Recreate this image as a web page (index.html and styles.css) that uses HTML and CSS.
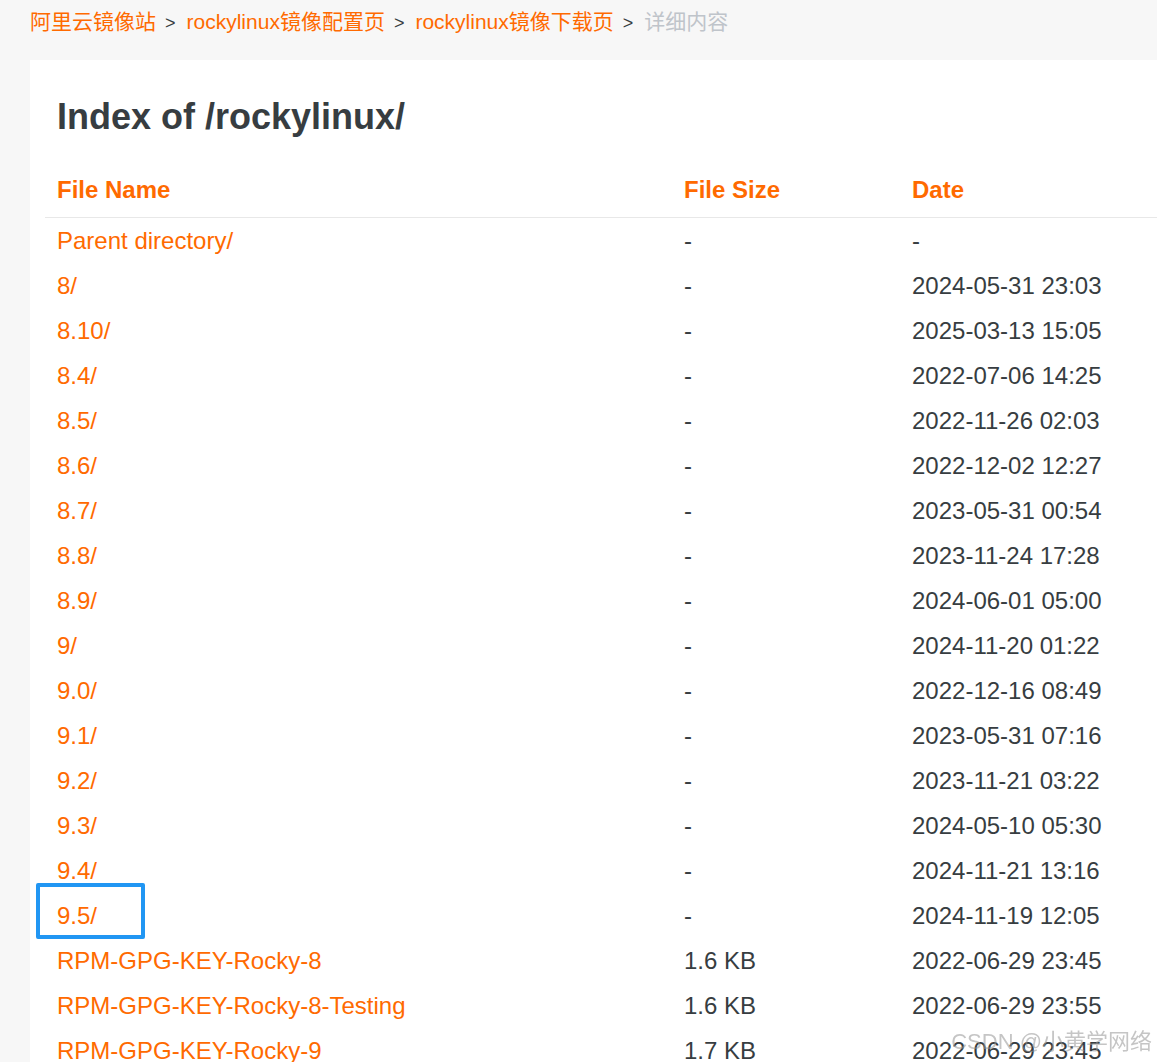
FILE: index.html
```html
<!DOCTYPE html>
<html lang="zh-CN">

<head>
  <meta charset="UTF-8" />
  <meta name="viewport" content="width=device-width, initial-scale=1.0" />
  <title>Index of /rockylinux/</title>
  <link rel="stylesheet" href="styles.css">
</head>

<body>
  <!-- breadcrumb -->
  <div class="crumbs">
    <a href="#">阿里云镜像站</a><span class="sep">&gt;</span><a href="#">rockylinux镜像配置页</a><span class="sep">&gt;</span><a href="#">rockylinux镜像下载页</a><span class="sep">&gt;</span><span class="current">详细内容</span>
  </div>

  <div class="panel">
    <h1>Index of /rockylinux/</h1>

    <table class="listing">
      <colgroup>
        <col class="col-name">
        <col class="col-size">
        <col class="col-date">
      </colgroup>
      <thead>
        <tr>
          <th>File Name</th>
          <th>File Size</th>
          <th>Date</th>
        </tr>
      </thead>
      <tbody>
        <tr><td><a href="#">Parent directory/</a></td><td>-</td><td>-</td></tr>
        <tr><td><a href="#">8/</a></td><td>-</td><td>2024-05-31 23:03</td></tr>
        <tr><td><a href="#">8.10/</a></td><td>-</td><td>2025-03-13 15:05</td></tr>
        <tr><td><a href="#">8.4/</a></td><td>-</td><td>2022-07-06 14:25</td></tr>
        <tr><td><a href="#">8.5/</a></td><td>-</td><td>2022-11-26 02:03</td></tr>
        <tr><td><a href="#">8.6/</a></td><td>-</td><td>2022-12-02 12:27</td></tr>
        <tr><td><a href="#">8.7/</a></td><td>-</td><td>2023-05-31 00:54</td></tr>
        <tr><td><a href="#">8.8/</a></td><td>-</td><td>2023-11-24 17:28</td></tr>
        <tr><td><a href="#">8.9/</a></td><td>-</td><td>2024-06-01 05:00</td></tr>
        <tr><td><a href="#">9/</a></td><td>-</td><td>2024-11-20 01:22</td></tr>
        <tr><td><a href="#">9.0/</a></td><td>-</td><td>2022-12-16 08:49</td></tr>
        <tr><td><a href="#">9.1/</a></td><td>-</td><td>2023-05-31 07:16</td></tr>
        <tr><td><a href="#">9.2/</a></td><td>-</td><td>2023-11-21 03:22</td></tr>
        <tr><td><a href="#">9.3/</a></td><td>-</td><td>2024-05-10 05:30</td></tr>
        <tr><td><a href="#">9.4/</a></td><td>-</td><td>2024-11-21 13:16</td></tr>
        <tr><td class="marked"><a href="#">9.5/</a><span class="mark-box"></span></td><td>-</td><td>2024-11-19 12:05</td></tr>
        <tr><td><a href="#">RPM-GPG-KEY-Rocky-8</a></td><td>1.6 KB</td><td>2022-06-29 23:45</td></tr>
        <tr><td><a href="#">RPM-GPG-KEY-Rocky-8-Testing</a></td><td>1.6 KB</td><td>2022-06-29 23:55</td></tr>
        <tr><td><a href="#">RPM-GPG-KEY-Rocky-9</a></td><td>1.7 KB</td><td>2022-06-29 23:45</td></tr>
      </tbody>
    </table>
  </div>

  <div class="watermark">CSDN @小黄学网络</div>
</body>

</html>
```

FILE: styles.css
```css
* {
  margin: 0;
  padding: 0;
  box-sizing: border-box;
  font-family: 'Liberation Sans', Arial, 'Noto Sans CJK SC', sans-serif;
}

body {
  background: #f7f7f7;
  color: #373d41;
  overflow-x: hidden;
}

a {
  color: #ff6a00;
  text-decoration: none;
}

.crumbs {
  height: 44px;
  line-height: 44px;
  padding-left: 30px;
  margin-bottom: 16px;
  font-size: 21px;
  white-space: nowrap;
}

.crumbs .sep {
  font-size: 18px;
  color: #373d41;
  margin: 0 11px 0 9px;
}

.crumbs .current {
  color: #bfc4ca;
}

.panel {
  background: #fff;
  margin-left: 30px;
  padding: 39px 0 40px 15px;
}

h1 {
  font-size: 36px;
  line-height: 36px;
  font-weight: bold;
  color: #373d41;
  margin-left: 12px;
}

.listing {
  width: 100%;
  margin-top: 32px;
  border-collapse: collapse;
  table-layout: fixed;
  font-size: 24px;
}

.col-name {
  width: 627px;
}

.col-size {
  width: 228px;
}

.listing th {
  text-align: left;
  color: #ff6a00;
  font-weight: bold;
  line-height: 45px;
  padding: 0 0 5px 12px;
  border-bottom: 1px solid #e8e8e8;
}

.listing td {
  line-height: 45px;
  padding-left: 12px;
  white-space: nowrap;
  color: #373d41;
}

.listing td.marked {
  position: relative;
}

/* blue annotation frame around 9.5/ */
.mark-box {
  position: absolute;
  left: -9px;
  top: -10px;
  width: 109px;
  height: 56px;
  border: 4px solid #2196f3;
  border-radius: 2px;
}

.watermark {
  position: fixed;
  right: 5px;
  bottom: 7px;
  font-size: 22px;
  color: rgba(150, 150, 150, 0.55);
  white-space: nowrap;
}
```
